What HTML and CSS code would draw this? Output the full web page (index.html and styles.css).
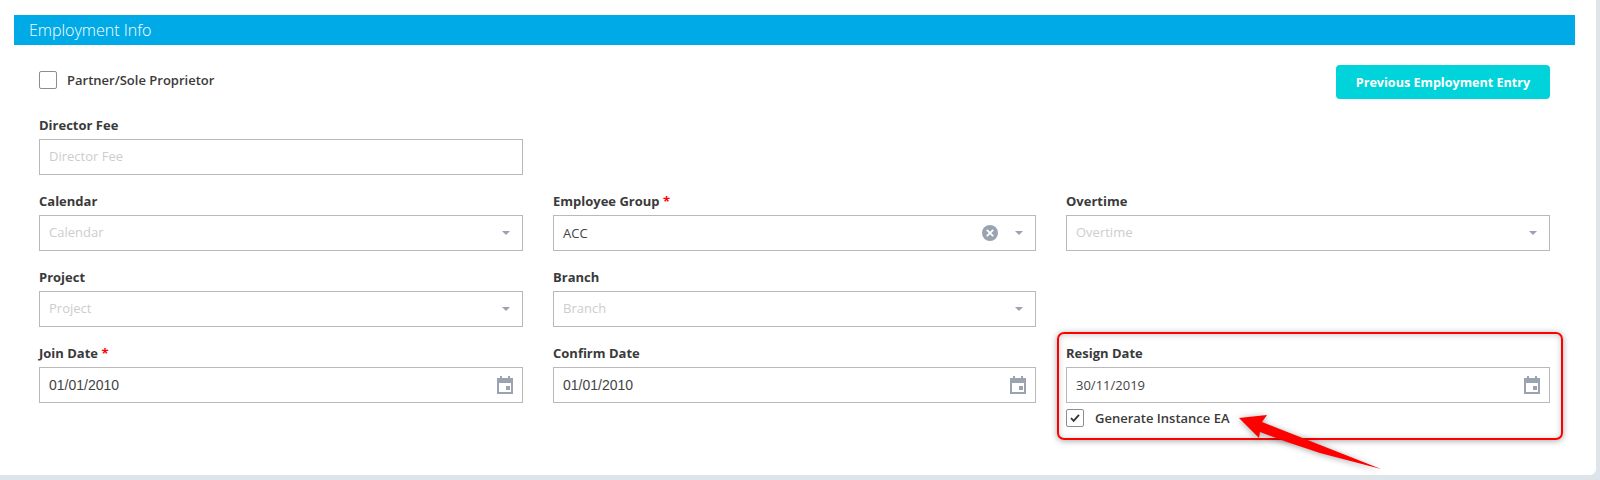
FILE: index.html
```html
<!DOCTYPE html>
<html lang="en">
<head>
<meta charset="utf-8">
<title>Employment Info</title>
<link rel="stylesheet" href="styles.css">
</head>
<body>
<main class="card">
  <h2 class="section-title">Employment Info</h2>
  <div class="section-body">
    <div class="top-row">
      <label class="check"><span class="box"></span><span>Partner/Sole Proprietor</span></label>
      <button class="btn" type="button">Previous Employment Entry</button>
    </div>
    <div class="grid">
      <div class="field">
        <div class="label">Director Fee</div>
        <div class="control"><span class="ph">Director Fee</span></div>
      </div>
      <div class="field"></div>
      <div class="field"></div>

      <div class="field">
        <div class="label">Calendar</div>
        <div class="control"><span class="ph">Calendar</span><span class="caret"></span></div>
      </div>
      <div class="field">
        <div class="label">Employee Group <span class="req">*</span></div>
        <div class="control"><span class="val">ACC</span>
          <svg class="clear" width="16" height="16" viewBox="0 0 16 16"><circle cx="8" cy="8" r="8" fill="#9aa3af"/><path d="M4.8 4.8l6.4 6.4M11.2 4.8l-6.4 6.4" stroke="#fff" stroke-width="1.8" fill="none"/></svg>
          <span class="caret"></span></div>
      </div>
      <div class="field">
        <div class="label">Overtime</div>
        <div class="control"><span class="ph">Overtime</span><span class="caret"></span></div>
      </div>

      <div class="field">
        <div class="label">Project</div>
        <div class="control"><span class="ph">Project</span><span class="caret"></span></div>
      </div>
      <div class="field">
        <div class="label">Branch</div>
        <div class="control"><span class="ph">Branch</span><span class="caret"></span></div>
      </div>
      <div class="field"></div>

      <div class="field">
        <div class="label">Join Date <span class="req">*</span></div>
        <div class="control date"><span class="val arial">01/01/2010</span>
          <svg class="cal" width="16" height="18" viewBox="0 0 16 18"><path fill="#9aa3af" fill-rule="evenodd" d="M3 0h2v2h6V0h2v2h3v16H0V2h3zM2 7v9h12V7z"/><rect x="9" y="10" width="4" height="4" fill="#9aa3af"/></svg>
        </div>
      </div>
      <div class="field">
        <div class="label">Confirm Date</div>
        <div class="control date"><span class="val arial">01/01/2010</span>
          <svg class="cal" width="16" height="18" viewBox="0 0 16 18"><path fill="#9aa3af" fill-rule="evenodd" d="M3 0h2v2h6V0h2v2h3v16H0V2h3zM2 7v9h12V7z"/><rect x="9" y="10" width="4" height="4" fill="#9aa3af"/></svg>
        </div>
      </div>
      <div class="field">
        <div class="label">Resign Date</div>
        <div class="control date"><span class="val">30/11/2019</span>
          <svg class="cal" width="16" height="18" viewBox="0 0 16 18"><path fill="#9aa3af" fill-rule="evenodd" d="M3 0h2v2h6V0h2v2h3v16H0V2h3zM2 7v9h12V7z"/><rect x="9" y="10" width="4" height="4" fill="#9aa3af"/></svg>
        </div>
        <label class="check sub"><span class="box on"><svg width="12" height="10" viewBox="0 0 12 10"><path d="M2 5l2.6 2.8 5.4-6" stroke="#333" stroke-width="1.8" fill="none"/></svg></span><span>Generate Instance EA</span></label>
      </div>
    </div>
  </div>
  <div class="highlight"></div>
  <svg class="arrow" width="170" height="80" viewBox="0 0 170 80"><path fill="#fe0000" d="M7 21 L35 18 L30 25 L149 72 L88 56 L55 45 L28 35 L27 41 Z"/></svg>
</main>
</body>
</html>
```
FILE: styles.css
```css
* { box-sizing: border-box; }
html, body { margin: 0; height: 100%; }
body { background: #dde4ea; font-family: "Open Sans", sans-serif; overflow: hidden; }
.card { position: relative; width: 1596px; height: 475px; background: #fff; border-bottom-right-radius: 6px; padding: 15px 21px 0 14px; }
.section-title { margin: 0; height: 30px; line-height: 30px; background: #00aae7; color: #fff; font-size: 16px; font-weight: 300; padding-left: 15px; }
.section-body { padding: 20px 25px 0; }
.top-row { display: flex; justify-content: space-between; align-items: flex-start; height: 51px; width: 1511px; }
.check { display: flex; align-items: center; gap: 10px; font-size: 13px; font-weight: 600; color: #3a3a3a; }
.top-row .check { margin-top: 6px; }
.box { width: 18px; height: 18px; border: 1px solid #8d8d8d; border-radius: 2px; background: #fff; display: flex; align-items: center; justify-content: center; }
.btn { height: 34px; width: 214px; border: 0; border-radius: 4px; background: #00d3da; color: #fff; font: 700 12.6px "Open Sans", sans-serif; padding: 0; }
.grid { display: grid; grid-template-columns: 484px 483px 484px; column-gap: 30px; grid-auto-rows: 76px; }
.label { font-size: 13px; font-weight: 700; color: #3a3a3a; line-height: 18px; height: 23px; }
.req { color: #f00; }
.control { height: 36px; border: 1px solid #b9b9b9; display: flex; align-items: center; padding: 0 12px 0 9px; font-size: 13px; }
.control.date { padding-right: 9px; }
.ph { color: #cdcdcd; flex: 1; padding-bottom: 2px; }
.val { color: #444; flex: 1; }
.arial { font-family: "Liberation Sans", sans-serif; font-size: 14px; }
.caret { width: 0; height: 0; border-left: 4.5px solid transparent; border-right: 4.5px solid transparent; border-top: 4.5px solid #9aa3af; margin-left: 17px; }
.cal { flex: none; }
.check.sub { margin-top: 6px; gap: 11px; }
.highlight { position: absolute; left: 1057px; top: 332px; width: 506px; height: 108px; border: 2px solid #f00; border-radius: 7px; box-shadow: 0 1px 6px rgba(0,0,0,.35), inset 0 1px 6px rgba(0,0,0,.2); pointer-events: none; }
.arrow { position: absolute; left: 1232px; top: 397px; filter: drop-shadow(0 1px 3px rgba(0,0,0,.35)); }
```
